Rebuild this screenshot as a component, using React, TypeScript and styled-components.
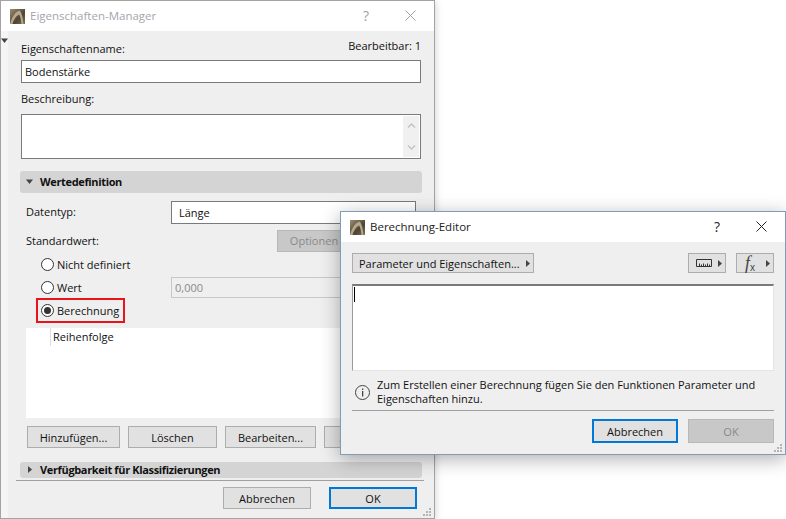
import styled, { createGlobalStyle } from 'styled-components';

const GlobalStyle = createGlobalStyle`
  html, body {
    margin: 0;
    padding: 0;
    background: #fff;
  }
  body {
    width: 786px;
    height: 519px;
    overflow: hidden;
    font-family: "Open Sans", "Liberation Sans", sans-serif;
    font-size: 11px;
    color: #111;
    white-space: nowrap;
  }
`;

const Logo = () => (
  <svg width="15" height="15" viewBox="0 0 15 15">
    <defs>
      <linearGradient id="logoBg" x1="0" y1="0" x2="1" y2="1">
        <stop offset="0" stopColor="#9c8e72" />
        <stop offset="0.6" stopColor="#4e4434" />
        <stop offset="1" stopColor="#7c6e55" />
      </linearGradient>
    </defs>
    <rect width="15" height="15" fill="url(#logoBg)" />
    <path d="M0 15C2 8 5 3 9.500 1.500C11.500 3 13 9 13.500 15H11.500C11 10 10 6.500 9 5.500C6 7 3.500 11 2.500 15Z" fill="#b5a88c" />
  </svg>
);

const CloseIcon = ({ color }: { color: string }) => (
  <svg width="11" height="11" viewBox="0 0 11 11">
    <path d="M0.500 0.500L10.500 10.500M10.500 0.500L0.500 10.500" stroke={color} strokeWidth="1" fill="none" />
  </svg>
);

const Caret = ({ dir = 'right' }: { dir?: 'right' | 'down' }) => (
  <svg width="7" height="7" viewBox="0 0 7 7">
    <path d={dir === 'right' ? 'M2 0L6 3.500L2 7Z' : 'M0 1.500H7L3.500 6Z'} fill="#444" />
  </svg>
);

const Grip = () => (
  <GripIcon width="10" height="10" viewBox="0 0 10 10">
    {[[7, 1], [4, 4], [7, 4], [1, 7], [4, 7], [7, 7]].map(([x, y]) => (
      <rect key={`${x}-${y}`} x={x} y={y} width="2" height="2" fill="#b4b4b4" />
    ))}
  </GripIcon>
);

const GripIcon = styled.svg`
  position: absolute;
  right: 2px;
  bottom: 1px;
`;

const Desktop = styled.div`
  position: relative;
  width: 786px;
  height: 519px;
  overflow: hidden;
`;

const Window = styled.div<{ $x: number; $y: number; $w: number; $h: number; $active?: boolean }>`
  position: absolute;
  left: ${(p) => p.$x}px;
  top: ${(p) => p.$y}px;
  width: ${(p) => p.$w}px;
  height: ${(p) => p.$h}px;
  box-sizing: border-box;
  display: flex;
  flex-direction: column;
  background: #efefef;
  border: 1px solid ${(p) => (p.$active ? '#7f9db9' : '#a3a3a3')};
  box-shadow: ${(p) => (p.$active ? '0 4px 18px rgba(0, 0, 0, 0.32)' : '0 2px 8px rgba(0, 0, 0, 0.2)')};
`;

const TitleBar = styled.div<{ $inactive?: boolean }>`
  flex: none;
  height: 30px;
  background: #fff;
  display: flex;
  align-items: center;
  padding-left: 9px;
  font-size: 11.500px;
  color: ${(p) => (p.$inactive ? '#a5a5ad' : '#222')};

  svg {
    flex: none;
  }
`;

const TitleText = styled.span`
  margin: -2px 0 0 5px;
  flex: 1;
`;

const HelpMark = styled.span<{ $inactive?: boolean }>`
  width: 12px;
  margin-top: -2px;
  text-align: center;
  font-size: 14px;
  color: ${(p) => (p.$inactive ? '#a0a0a0' : '#222')};
`;

const CloseBox = styled.span`
  display: flex;
  margin: -2px 18px 0 33px;
`;

const MainBody = styled.div`
  flex: 1;
  display: flex;
  min-height: 0;
`;

const SideStrip = styled.div`
  flex: none;
  width: 7px;
  background: #f5f5f5;
  padding-top: 6px;
  svg {
    display: block;
  }
`;

const MainContent = styled.div`
  flex: none;
  width: 400px;
  margin-left: 13px;
  padding-top: 10px;
  display: flex;
  flex-direction: column;
`;

const NameHeader = styled.div`
  display: flex;
  justify-content: space-between;
  height: 16px;
  line-height: 16px;
  margin-bottom: 3px;
`;

const EditCount = styled.span`
  margin-top: -3px;
`;

const FieldLabel = styled.label`
  display: block;
  height: 16px;
  line-height: 16px;
`;

const TextInput = styled.div`
  box-sizing: border-box;
  height: 23px;
  line-height: 21px;
  padding-left: 3px;
  background: #fff;
  border: 1px solid #7a7a7a;
`;

const DescLabel = styled(FieldLabel)`
  margin: 8px 0 7px;
`;

const DescBox = styled.div`
  box-sizing: border-box;
  height: 45px;
  background: #fff;
  border: 1px solid #7a7a7a;
  display: flex;
  justify-content: flex-end;
  padding: 1px;
`;

const ScrollTrack = styled.div`
  width: 16px;
  background: #f0f0f0;
  display: flex;
  flex-direction: column;
  justify-content: space-between;
  align-items: center;
  padding: 7px 0;
  box-sizing: border-box;
`;

const SectionBar = styled.div<{ $h: number; $top: number; $gap: number }>`
  flex: none;
  box-sizing: border-box;
  height: ${(p) => p.$h}px;
  margin: ${(p) => p.$top}px -1px 0;
  padding: 0 0 2px 6px;
  border-radius: 3px;
  background: #d4d4d4;
  display: flex;
  align-items: center;
  gap: ${(p) => p.$gap}px;
  font-weight: 700;
  letter-spacing: -0.350px;
`;

const FormRow = styled.div<{ $top: number; $h: number }>`
  flex: none;
  display: flex;
  align-items: center;
  margin: ${(p) => p.$top}px 0 0 5px;
  height: ${(p) => p.$h}px;
`;

const RowLabel = styled.span`
  width: 145px;
  flex: none;
  margin-top: -2px;
`;

const SelectBox = styled(TextInput)`
  width: 245px;
  padding-left: 7px;
`;

const OptionsButton = styled.div`
  margin-left: 106px;
  width: 74px;
  height: 22px;
  box-sizing: border-box;
  text-align: center;
  line-height: 20px;
  background: #c8c8c8;
  border: 1px solid #b8b8b8;
  color: #8a8a8a;
`;

const Radio = styled.span<{ $checked?: boolean }>`
  flex: none;
  width: 13px;
  height: 13px;
  box-sizing: border-box;
  border: 1px solid #333;
  border-radius: 50%;
  background: #fff;
  display: flex;
  align-items: center;
  justify-content: center;

  &::after {
    content: '';
    display: ${(p) => (p.$checked ? 'block' : 'none')};
    width: 7px;
    height: 7px;
    border-radius: 50%;
    background: #333;
  }
`;

const RadioRow = styled.div`
  flex: none;
  height: 22px;
  margin-left: 15px;
  display: flex;
  align-items: center;
  gap: 3px;
`;

const RadioLabel = styled.span`
  width: 111px;
`;

const ValueBox = styled.div`
  box-sizing: border-box;
  width: 245px;
  height: 21px;
  line-height: 19px;
  padding-left: 3px;
  background: #efefef;
  border: 1px solid #c8c8c8;
  color: #8a8a8a;
`;

const MarkedOption = styled.div`
  flex: none;
  box-sizing: border-box;
  width: 89px;
  height: 25px;
  margin-left: 10px;
  padding-left: 3px;
  border: 2px solid #e8141c;
  display: flex;
  align-items: center;
  gap: 3px;
`;

const OrderList = styled.div`
  flex: none;
  width: 390px;
  height: 90px;
  margin: 5px 0 0 5px;
  background: #fff;
`;

const OrderHead = styled.div`
  margin-left: 24px;
  height: 18px;
  line-height: 18px;
  padding-left: 2px;
  border-left: 1px solid #dcdcdc;
`;

const ButtonRow = styled.div`
  flex: none;
  display: flex;
  gap: 8px;
  margin: 8px 0 0 6px;
`;

const PushButton = styled.div<{ $w: number; $h?: number; $focus?: boolean; $disabled?: boolean }>`
  flex: none;
  width: ${(p) => p.$w}px;
  height: ${(p) => p.$h ?? 22}px;
  box-sizing: border-box;
  display: flex;
  align-items: center;
  justify-content: center;
  background: ${(p) => (p.$disabled ? '#c8c8c8' : '#e1e1e1')};
  border: ${(p) =>
    p.$focus ? '2px solid #0078d7' : `1px solid ${p.$disabled ? '#b8b8b8' : '#adadad'}`};
  color: ${(p) => (p.$disabled ? '#8a8a8a' : '#111')};
`;

const Divider = styled.div<{ $top: number; $left: number; $right: number }>`
  flex: none;
  height: 1px;
  background: #a0a0a0;
  margin: ${(p) => p.$top}px ${(p) => p.$right}px 0 ${(p) => p.$left}px;
`;

const DialogFooter = styled.div<{ $top: number; $gap: number }>`
  flex: none;
  display: flex;
  justify-content: flex-end;
  gap: ${(p) => p.$gap}px;
  margin-top: ${(p) => p.$top}px;
`;

const MainFooter = styled(DialogFooter)`
  padding-right: 4px;
`;

const EditorBody = styled.div`
  flex: 1;
  display: flex;
  flex-direction: column;
  padding: 11px 11px 0;
`;

const Toolbar = styled.div`
  flex: none;
  height: 20px;
  display: flex;
  gap: 10px;
`;

const ToolButton = styled.div<{ $w: number }>`
  flex: none;
  width: ${(p) => p.$w}px;
  box-sizing: border-box;
  background: #e1e1e1;
  border: 1px solid #adadad;
  display: flex;
  align-items: center;
  justify-content: space-between;
  padding: 0 2px 0 6px;
`;

const ToolSpacer = styled.div`
  flex: 1;
`;

const FxMark = styled.span`
  font-family: "Liberation Serif", serif;
  font-style: italic;
  font-size: 18px;
  line-height: 16px;
  color: #444;
  margin-left: 2px;

  sub {
    font-style: normal;
    font-family: "Liberation Sans", sans-serif;
    font-size: 10px;
    line-height: 0;
    vertical-align: -2px;
  }
`;

const FormulaArea = styled.div`
  flex: none;
  box-sizing: border-box;
  height: 87px;
  margin-top: 11px;
  background: #fff;
  border-top: 2px solid #7a7a7a;
  border-left: 1px solid #9a9a9a;
  border-right: 1px solid #e4e4e4;
  border-bottom: 1px solid #e4e4e4;
  padding: 1px 0 0 1px;
`;

const TextCaret = styled.div`
  width: 1px;
  height: 15px;
  background: #000;
`;

const InfoRow = styled.div`
  flex: none;
  display: flex;
  align-items: center;
  gap: 7px;
  margin: 7px 0 0 3px;
  height: 28px;
`;

const InfoText = styled.p`
  margin: 0;
  line-height: 14px;
  width: 395px;
  white-space: normal;
`;

const InfoIcon = () => (
  <svg width="15" height="15" viewBox="0 0 15 15" style={{ flex: 'none' }}>
    <circle cx="7.500" cy="7.500" r="7" fill="none" stroke="#444" />
    <rect x="7" y="3.500" width="1.300" height="1.500" fill="#444" />
    <rect x="7" y="6" width="1.300" height="5.500" fill="#444" />
  </svg>
);

const RulerShape = styled.svg`
  margin-left: 1px;
`;

const RulerIcon = () => (
  <RulerShape width="16" height="8" viewBox="0 0 16 8">
    <path
      d="M0.500 0.500H15.500V7.500H0.500ZM3.500 7V4.500M5.500 7V5.500M7.500 7V4.500M9.500 7V5.500M11.500 7V4.500M13.500 7V5.500"
      fill="none"
      stroke="#333"
    />
  </RulerShape>
);

const App = () => {
  return (
    <Desktop>
      <GlobalStyle />
      <Window $x={0} $y={0} $w={435} $h={519}>
        <TitleBar $inactive>
          <Logo />
          <TitleText>Eigenschaften-Manager</TitleText>
          <HelpMark $inactive>?</HelpMark>
          <CloseBox>
            <CloseIcon color="#a0a0a0" />
          </CloseBox>
        </TitleBar>
        <MainBody>
          <SideStrip>
            <Caret dir="down" />
          </SideStrip>
          <MainContent>
            <NameHeader>
              <span>Eigenschaftenname:</span>
              <EditCount>Bearbeitbar: 1</EditCount>
            </NameHeader>
            <TextInput>Bodenstärke</TextInput>
            <DescLabel>Beschreibung:</DescLabel>
            <DescBox>
              <ScrollTrack>
                <svg width="9" height="5" viewBox="0 0 9 5">
                  <path d="M1 4.500L4.500 1L8 4.500" fill="none" stroke="#c4c4c4" strokeWidth="1.500" />
                </svg>
                <svg width="9" height="5" viewBox="0 0 9 5">
                  <path d="M1 0.500L4.500 4L8 0.500" fill="none" stroke="#c4c4c4" strokeWidth="1.500" />
                </svg>
              </ScrollTrack>
            </DescBox>
            <SectionBar $h={22} $top={12} $gap={7}>
              <Caret dir="down" />
              Wertedefinition
            </SectionBar>
            <FormRow $top={8} $h={23}>
              <RowLabel>Datentyp:</RowLabel>
              <SelectBox>Länge</SelectBox>
            </FormRow>
            <FormRow $top={6} $h={22}>
              <RowLabel>Standardwert:</RowLabel>
              <OptionsButton>Optionen</OptionsButton>
            </FormRow>
            <FormRow $top={1} $h={22}>
              <RadioRow>
                <Radio />
                <RadioLabel>Nicht definiert</RadioLabel>
              </RadioRow>
            </FormRow>
            <FormRow $top={1} $h={22}>
              <RadioRow>
                <Radio />
                <RadioLabel>Wert</RadioLabel>
                <ValueBox>0,000</ValueBox>
              </RadioRow>
            </FormRow>
            <FormRow $top={0} $h={25}>
              <MarkedOption>
                <Radio $checked />
                Berechnung
              </MarkedOption>
            </FormRow>
            <OrderList>
              <OrderHead>Reihenfolge</OrderHead>
            </OrderList>
            <ButtonRow>
              <PushButton $w={93}>Hinzufügen...</PushButton>
              <PushButton $w={89}>Löschen</PushButton>
              <PushButton $w={91}>Bearbeiten...</PushButton>
              <PushButton $w={87}>Anzeigen...</PushButton>
            </ButtonRow>
            <SectionBar $h={16} $top={14} $gap={7}>
              <Caret />
              Verfügbarkeit für Klassifizierungen
            </SectionBar>
            <Divider $top={2} $left={-5} $right={-3} />
            <MainFooter $top={6} $gap={18}>
              <PushButton $w={88}>Abbrechen</PushButton>
              <PushButton $w={88} $focus>
                OK
              </PushButton>
            </MainFooter>
          </MainContent>
        </MainBody>
        <Grip />
      </Window>

      <Window $x={340} $y={211} $w={446} $h={244} $active>
        <TitleBar>
          <Logo />
          <TitleText>Berechnung-Editor</TitleText>
          <HelpMark>?</HelpMark>
          <CloseBox>
            <CloseIcon color="#222" />
          </CloseBox>
        </TitleBar>
        <EditorBody>
          <Toolbar>
            <ToolButton $w={182}>
              Parameter und Eigenschaften...
              <Caret />
            </ToolButton>
            <ToolSpacer />
            <ToolButton $w={38}>
              <RulerIcon />
              <Caret />
            </ToolButton>
            <ToolButton $w={38}>
              <FxMark>
                f<sub>x</sub>
              </FxMark>
              <Caret />
            </ToolButton>
          </Toolbar>
          <FormulaArea>
            <TextCaret />
          </FormulaArea>
          <InfoRow>
            <InfoIcon />
            <InfoText>
              Zum Erstellen einer Berechnung fügen Sie den Funktionen Parameter und Eigenschaften hinzu.
            </InfoText>
          </InfoRow>
          <Divider $top={4} $left={0} $right={0} />
          <DialogFooter $top={8} $gap={10}>
            <PushButton $w={86} $h={24} $focus>
              Abbrechen
            </PushButton>
            <PushButton $w={86} $h={24} $disabled>
              OK
            </PushButton>
          </DialogFooter>
        </EditorBody>
        <Grip />
      </Window>
    </Desktop>
  );
};

export default App;
